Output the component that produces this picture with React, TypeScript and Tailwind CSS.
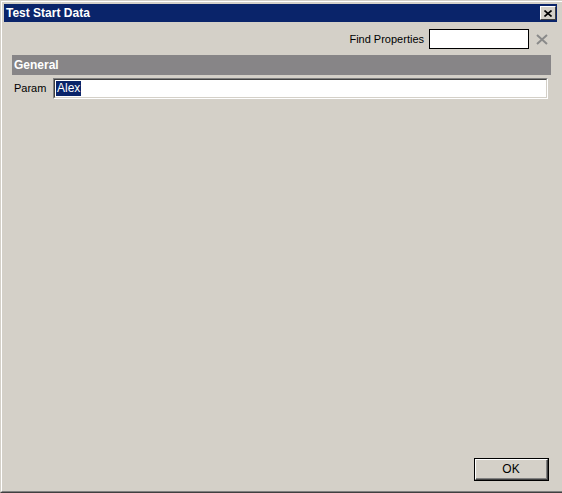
export default function App() {
  return (
    <div className="w-[562px] h-[493px] overflow-hidden bg-[#d4d0c8] border-t border-l border-[#d4d0c8] border-b border-b-[#404040] font-['Liberation_Sans',Arial,sans-serif] text-[11px] text-black">
      <div className="h-full flex flex-col border-t border-l border-white border-b border-b-[#808080] pt-[2px] pl-[2px] pr-[5px]">
        {/* Title bar */}
        <div className="h-[18px] bg-[#0a246a] flex items-center justify-between pl-[2px] pr-px">
          <span className="text-white font-bold text-[12px] leading-none">Test Start Data</span>
          <div className="w-[16px] h-[14px] bg-[#d4d0c8] border-t border-l border-white border-b border-r border-b-[#404040] border-r-[#404040] flex items-center justify-center">
            <svg width="8" height="7" viewBox="0 0 8 7">
              <path d="M0.5 0.5 L7.5 6.5 M7.5 0.5 L0.5 6.5" stroke="#000" strokeWidth="1.6" />
            </svg>
          </div>
        </div>

        {/* Body */}
        <div className="flex-1 flex flex-col pb-[10px]">
          <div className="flex items-center justify-end mt-[7px] pr-[9px]">
            <span className="mr-[5px]">Find Properties</span>
            <div className="w-[100px] h-[20px] bg-white border border-black" />
            <svg className="ml-[7px]" width="12" height="11" viewBox="0 0 12 11">
              <path d="M1 1 L11 10 M11 1 L1 10" stroke="#8a8a8a" strokeWidth="2" />
            </svg>
          </div>

          <div className="mt-[6px] ml-[8px] mr-[6px] h-[20px] bg-[#878587] flex items-center pl-[2px]">
            <span className="text-white font-bold text-[12px]">General</span>
          </div>

          <div className="mt-[3px] ml-[10px] mr-[9px] flex items-center">
            <span className="w-[39px] shrink-0">Param</span>
            <div className="flex-1 h-[21px] border-t border-l border-[#808080] border-b border-r border-b-white border-r-white">
              <div className="h-full bg-white border-t border-l border-[#404040] border-b border-r border-b-[#d4d0c8] border-r-[#d4d0c8] flex items-center pl-px">
                <span className="bg-[#0a246a] text-white text-[12px] leading-[15px] px-px">Alex</span>
              </div>
            </div>
          </div>

          <div className="flex-1" />

          <div className="flex justify-end pr-[8px]">
            <div className="w-[75px] h-[23px] border border-black">
              <div className="h-full border-t border-l border-white border-b border-r border-b-[#404040] border-r-[#404040]">
                <div className="h-full border-b border-r border-[#808080] flex items-center justify-center">
                  <span className="text-[12px]">OK</span>
                </div>
              </div>
            </div>
          </div>
        </div>
      </div>
    </div>
  );
}
